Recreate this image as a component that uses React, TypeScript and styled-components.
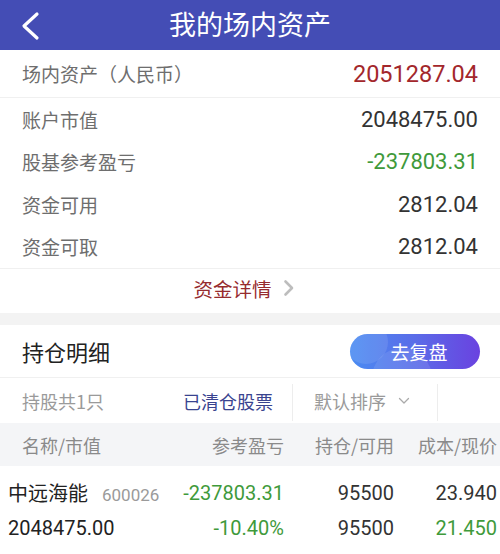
import React from "react";
import styled, { createGlobalStyle } from "styled-components";

const GlobalStyle = createGlobalStyle`
  body {
    margin: 0;
    background: #ffffff;
    font-family: Roboto, "Noto Sans CJK SC", sans-serif;
  }
`;

type SummaryItem = {
  label: string;
  value: string;
  tone?: "red" | "green";
};

const summary: SummaryItem[] = [
  { label: "账户市值", value: "2048475.00" },
  { label: "股基参考盈亏", value: "-237803.31", tone: "green" },
  { label: "资金可用", value: "2812.04" },
  { label: "资金可取", value: "2812.04" },
];

const App = () => {
  return (
    <Page>
      <GlobalStyle />
      <Header>
        <BackButton>
          <svg width="20" height="30" viewBox="0 0 20 30">
            <path d="M16 3 L3 15 L16 27" fill="none" stroke="#fff" strokeWidth="3.2" strokeLinecap="round" strokeLinejoin="round" />
          </svg>
        </BackButton>
        <Title>我的场内资产</Title>
        <span />
      </Header>

      <TotalRow>
        <Label>场内资产（人民币）</Label>
        <Value tone="red" big>2051287.04</Value>
      </TotalRow>

      <SummaryList>
        {summary.map((item) => (
          <SummaryRow key={item.label}>
            <Label>{item.label}</Label>
            <Value tone={item.tone}>{item.value}</Value>
          </SummaryRow>
        ))}
      </SummaryList>

      <DetailLink>
        <DetailText>资金详情</DetailText>
        <svg width="12" height="18" viewBox="0 0 12 18">
          <path d="M2.5 2.5 L9 9 L2.5 15.5" fill="none" stroke="#bdbdbd" strokeWidth="2.6" strokeLinecap="round" strokeLinejoin="round" />
        </svg>
      </DetailLink>

      <Gap />

      <HoldingHead>
        <SectionTitle>持仓明细</SectionTitle>
        <ReviewButton>去复盘</ReviewButton>
      </HoldingHead>

      <Tabs>
        <TabCell width={183} pad={22}>
          <TabText>持股共1只</TabText>
        </TabCell>
        <TabCell width={109}>
          <TabText active>已清仓股票</TabText>
        </TabCell>
        <TabDivider />
        <TabCell width={144} pad={21}>
          <TabText>默认排序</TabText>
          <svg width="12" height="8" viewBox="0 0 12 8" style={{ marginLeft: 12 }}>
            <path d="M1.5 1.5 L6 6 L10.5 1.5" fill="none" stroke="#aaa" strokeWidth="1.3" strokeLinecap="round" strokeLinejoin="round" />
          </svg>
        </TabCell>
        <TabDivider />
      </Tabs>

      <ColumnHead>
        <HeadCell first>名称/市值</HeadCell>
        <HeadCell>参考盈亏</HeadCell>
        <HeadCell>持仓/可用</HeadCell>
        <HeadCell>成本/现价</HeadCell>
      </ColumnHead>

      <Holding>
        <DataRow>
          <NameCell>
            <StockName>中远海能</StockName>
            <StockCode>600026</StockCode>
          </NameCell>
          <DataCell tone="green">-237803.31</DataCell>
          <DataCell>95500</DataCell>
          <DataCell>23.940</DataCell>
        </DataRow>
        <DataRow>
          <NameCell>
            <StockName>2048475.00</StockName>
          </NameCell>
          <DataCell tone="green">-10.40%</DataCell>
          <DataCell>95500</DataCell>
          <DataCell tone="green">21.450</DataCell>
        </DataRow>
      </Holding>
    </Page>
  );
};

const toneColor = (tone?: "red" | "green") =>
  tone === "red" ? "#a3272c" : tone === "green" ? "#3f9a3b" : "#333333";

const Page = styled.div`
  width: 500px;
  height: 554px;
  overflow: hidden;
  background: #ffffff;
`;

const Header = styled.div`
  height: 50px;
  background: #444db5;
  display: grid;
  grid-template-columns: 60px 1fr 60px;
  align-items: center;
`;

const BackButton = styled.div`
  display: flex;
  align-items: center;
  padding-left: 21px;
  padding-top: 1px;
`;

const Title = styled.div`
  text-align: center;
  color: #ffffff;
  font-family: "Noto Sans CJK SC", sans-serif;
  font-size: 27px;
  line-height: 1;
  padding-bottom: 4px;
`;

const TotalRow = styled.div`
  height: 47px;
  display: flex;
  align-items: center;
  justify-content: space-between;
  padding: 0 22px;
  border-bottom: 1px solid #f0f0f0;
`;

const SummaryList = styled.div`
  border-bottom: 1px solid #f0f0f0;
`;

const SummaryRow = styled.div`
  height: 42.5px;
  display: flex;
  align-items: center;
  justify-content: space-between;
  padding: 0 22px;
`;

const Label = styled.span`
  font-family: "Noto Sans CJK SC", sans-serif;
  font-size: 19px;
  color: #6e6e6e;
`;

const Value = styled.span<{ tone?: "red" | "green"; big?: boolean }>`
  font-family: Roboto, sans-serif;
  font-size: ${(p) => (p.big ? "23.5px" : "22px")};
  color: ${(p) => toneColor(p.tone)};
`;

const DetailLink = styled.div`
  height: 44px;
  display: flex;
  align-items: center;
  justify-content: center;
  gap: 11px;
  padding-right: 12px;
  padding-bottom: 6px;
  box-sizing: border-box;
`;

const DetailText = styled.span`
  font-family: "Noto Sans CJK SC", sans-serif;
  font-size: 19.5px;
  color: #962b2e;
`;

const Gap = styled.div`
  height: 12px;
  background: #f3f3f3;
`;

const HoldingHead = styled.div`
  height: 52px;
  display: flex;
  align-items: center;
  justify-content: space-between;
  padding: 0 20px 0 22px;
  border-bottom: 1px solid #f0f0f0;
`;

const SectionTitle = styled.span`
  font-family: "Noto Sans CJK SC", sans-serif;
  font-size: 22px;
  color: #222222;
`;

const ReviewButton = styled.button`
  position: relative;
  overflow: hidden;
  width: 130px;
  height: 35px;
  border: none;
  border-radius: 18px;
  background: linear-gradient(90deg, #4a8cf2 0%, #5a6ce8 50%, #6a42e0 100%);
  color: #ffffff;
  font-family: "Noto Sans CJK SC", sans-serif;
  font-size: 19px;
  padding: 0 0 0 8px;
  margin-top: 1px;

  &::before,
  &::after {
    content: "";
    position: absolute;
    border-radius: 50%;
    background: rgba(255, 255, 255, 0.1);
  }
  &::before {
    width: 44px;
    height: 44px;
    left: -6px;
    top: -14px;
  }
  &::after {
    width: 60px;
    height: 60px;
    left: 22px;
    top: 14px;
  }
`;

const Tabs = styled.div`
  height: 45px;
  display: flex;
  align-items: stretch;
`;

const TabCell = styled.div<{ width: number; pad?: number }>`
  width: ${(p) => p.width}px;
  padding-left: ${(p) => p.pad ?? 0}px;
  box-sizing: border-box;
  display: flex;
  align-items: center;
`;

const TabText = styled.span<{ active?: boolean }>`
  font-family: "Noto Sans CJK SC", sans-serif;
  font-size: 18px;
  color: ${(p) => (p.active ? "#39438f" : "#9a9a9a")};
`;

const TabDivider = styled.div`
  width: 1px;
  margin: 6px 0 2px;
  background: #ededed;
`;

const ColumnHead = styled.div`
  height: 43px;
  background: #f4f5f7;
  display: grid;
  grid-template-columns: 1fr 110px 110px 103px;
  align-items: center;
  padding: 0 3px 0 8px;
`;

const HeadCell = styled.span<{ first?: boolean }>`
  font-family: "Noto Sans CJK SC", sans-serif;
  font-size: 18px;
  color: #8a8a8a;
  text-align: ${(p) => (p.first ? "left" : "right")};
  padding-left: ${(p) => (p.first ? "14px" : "0")};
`;

const Holding = styled.div`
  padding-top: 9px;
`;

const DataRow = styled.div`
  height: 35px;
  display: grid;
  grid-template-columns: 1fr 110px 110px 103px;
  align-items: center;
  padding: 0 3px 0 8px;
`;

const NameCell = styled.div`
  display: flex;
  align-items: baseline;
  gap: 14px;
`;

const StockName = styled.span`
  font-family: Roboto, "Noto Sans CJK SC", sans-serif;
  font-size: 20px;
  color: #222222;
`;

const StockCode = styled.span`
  font-family: Roboto, sans-serif;
  font-size: 17px;
  color: #9a9a9a;
`;

const DataCell = styled.span<{ tone?: "red" | "green" }>`
  font-family: Roboto, sans-serif;
  font-size: 20px;
  text-align: right;
  color: ${(p) => toneColor(p.tone)};
`;

export default App;
